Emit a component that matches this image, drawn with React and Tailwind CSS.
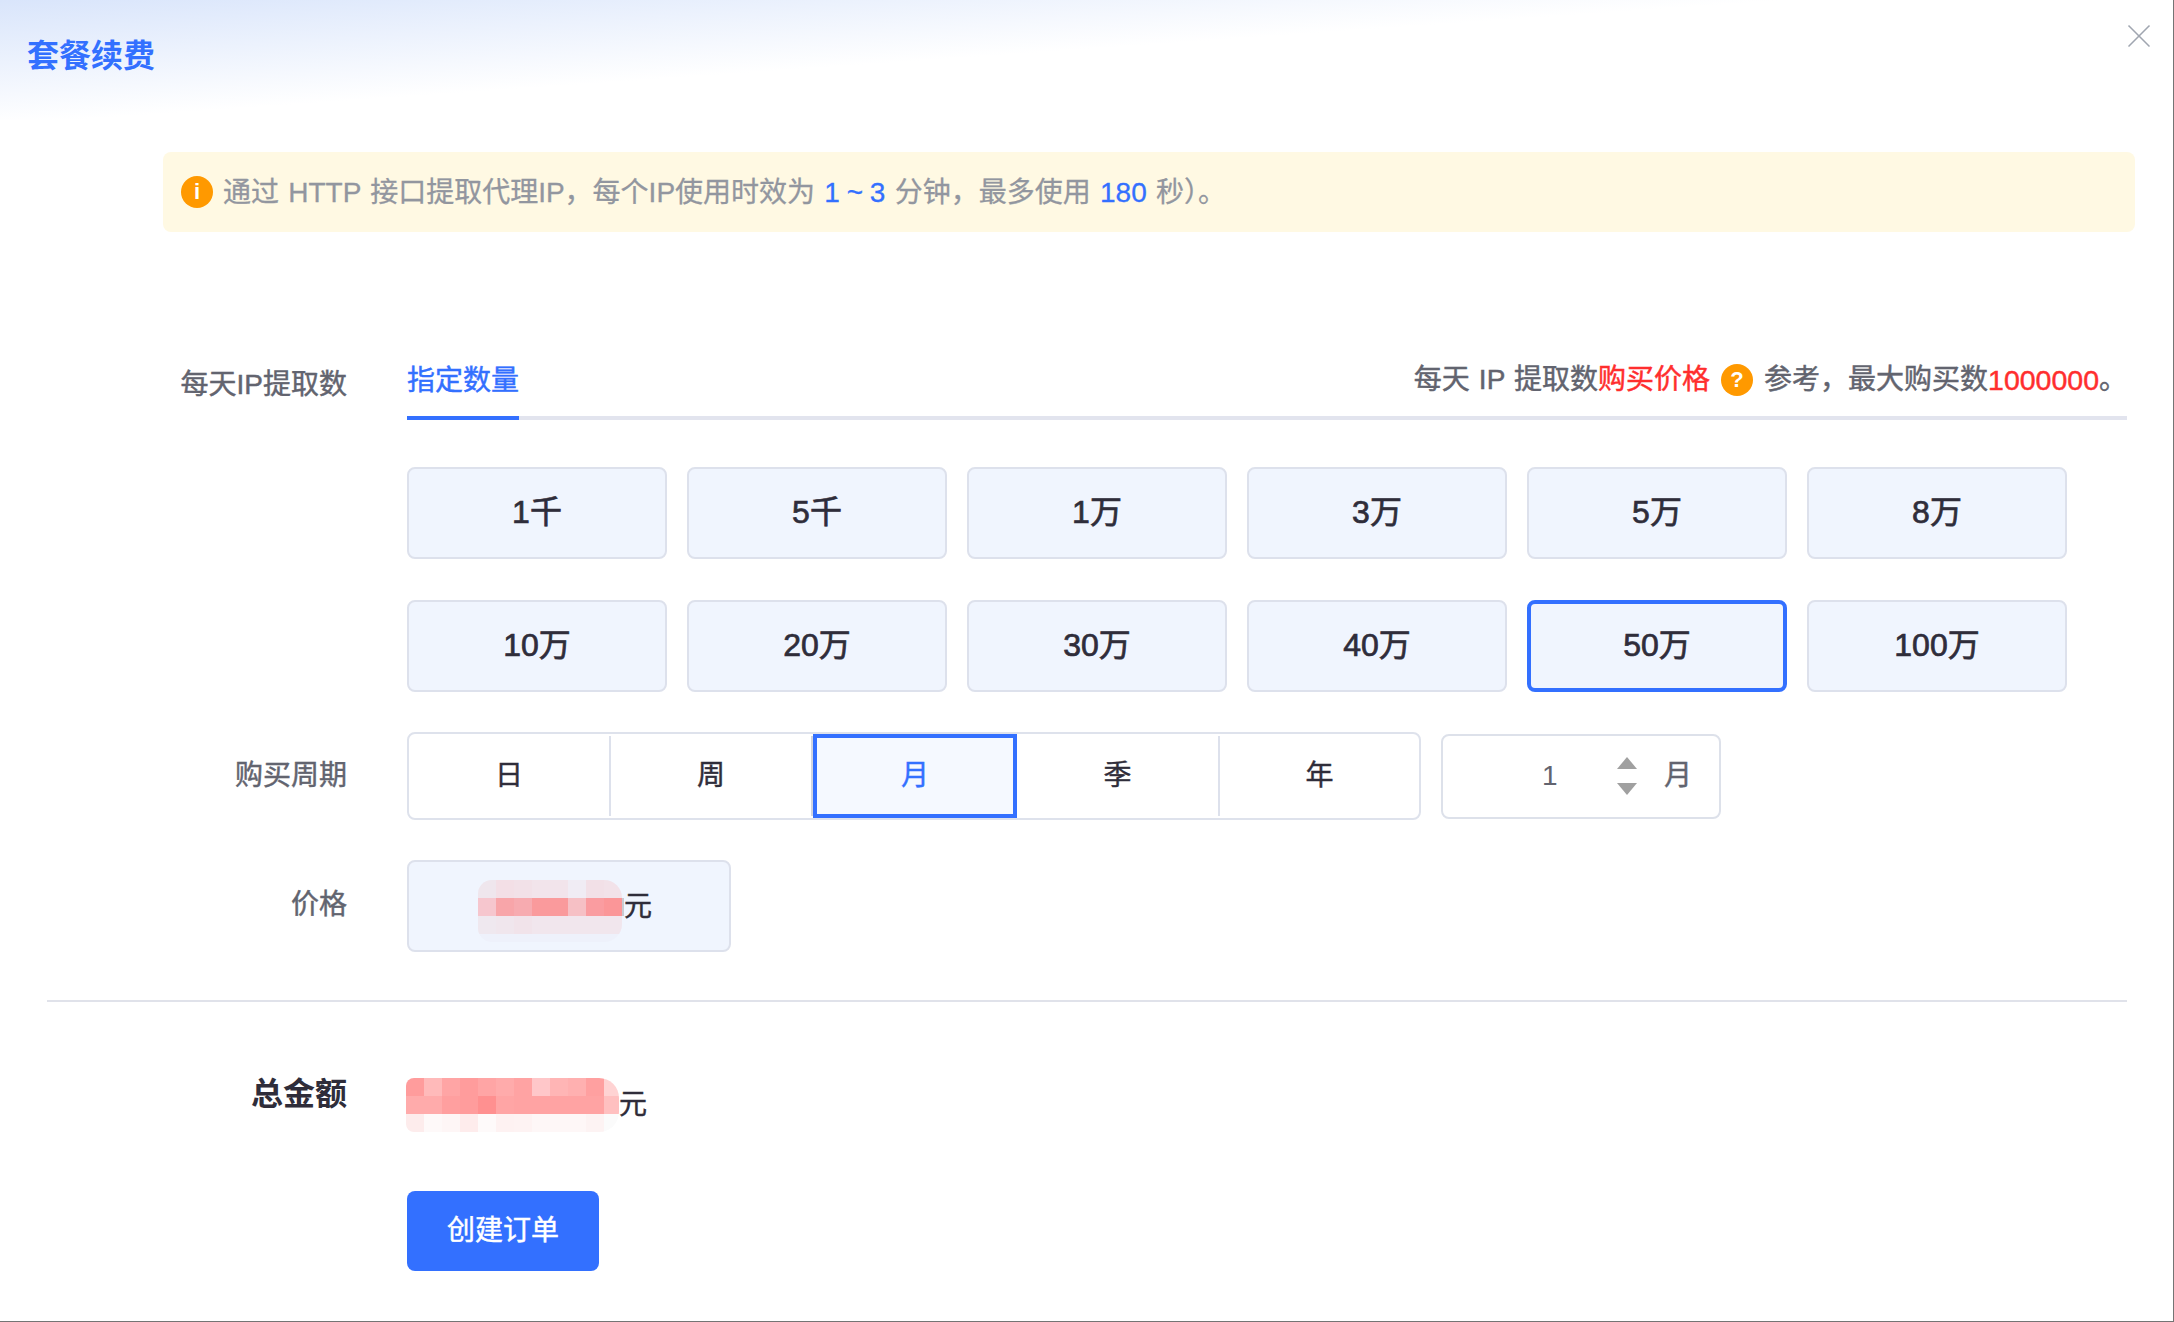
import { X } from "lucide-react";

const font = "font-['Liberation_Sans','Noto_Sans_CJK_SC',sans-serif]";
// the reference text sits between regular and bold, and the CJK font has no medium cut here
const medium = "[-webkit-text-stroke:0.45px]";

const amounts = ["1千", "5千", "1万", "3万", "5万", "8万", "10万", "20万", "30万", "40万", "50万", "100万"];

const priceBlur = [
  ["bg-[#efe6ed]", "bg-[#f3dfe6]", "bg-[#f2e1e8]", "bg-[#f2e4eb]", "bg-[#f2e4eb]", "bg-[#f0ecf4]", "bg-[#f2e0e7]", "bg-[#f2e2e9]"],
  ["bg-[#f6c6ce]", "bg-[#f8a5a9]", "bg-[#f7abb0]", "bg-[#fa9a9c]", "bg-[#fa9a9c]", "bg-[#f6c0c5]", "bg-[#fa9ca0]", "bg-[#fb9698]"],
  ["bg-[#efe8ef]", "bg-[#f0e6ed]", "bg-[#f1e3ea]", "bg-[#f1e6ed]", "bg-[#f1e6ed]", "bg-[#f1e6ed]", "bg-[#f1e6ed]", "bg-[#f1e6ed]"],
];

const totalBlur = [
  ["bg-[#ff9c9c]", "bg-[#ffbaba]", "bg-[#ffa5a5]", "bg-[#ff9c9c]", "bg-[#ffa5a5]", "bg-[#ffabab]", "bg-[#ffa3a3]", "bg-[#ffc7c9]", "bg-[#ffb5b5]", "bg-[#ffb0b0]", "bg-[#ffa0a0]", "bg-[#ffd3d3]"],
  ["bg-[#ffabab]", "bg-[#ffabab]", "bg-[#ff9f9f]", "bg-[#ff9c9c]", "bg-[#ff9090]", "bg-[#ffa5a5]", "bg-[#ffa3a3]", "bg-[#ffa3a3]", "bg-[#ffa3a3]", "bg-[#ffa3a3]", "bg-[#ffa3a3]", "bg-[#ffc0c0]"],
  ["bg-[#fdecec]", "bg-[#fef9f9]", "bg-[#fef6f6]", "bg-[#feecec]", "bg-[#fefafa]", "bg-[#fef2f2]", "bg-[#fef3f3]", "bg-[#fef7f7]", "bg-[#fef7f7]", "bg-[#fef7f7]", "bg-[#fdf3f3]", "bg-[#fbfbfb]"],
];

const Badge = ({ children }) => (
  <span className="flex h-[32px] w-[32px] shrink-0 items-center justify-center rounded-full bg-[#ff9900] text-[22px] font-bold leading-none text-white">
    {children}
  </span>
);

const Blur = ({ rows, className }) => (
  <div className={`shrink-0 overflow-hidden ${className}`}>
    {rows.map((row, i) => (
      <div key={i} className="flex">
        {row.map((color, j) => (
          <div key={j} className={`h-[18px] w-[18px] shrink-0 ${color}`} />
        ))}
      </div>
    ))}
  </div>
);

const Label = ({ children, className = `text-[28px] text-[#62646f] ${medium}` }) => (
  <div className={`w-[347px] shrink-0 text-right leading-[40px] ${className}`}>{children}</div>
);

export default function App() {
  return (
    <div className={`${font} flex h-[1322px] w-[2174px] flex-col overflow-hidden border-r border-b border-[#747474] bg-white`}>
      {/* Header */}
      <div className="flex h-[120px] shrink-0 items-start justify-between bg-[linear-gradient(176deg,#d9e5fb_0%,#ffffff_46%)] pl-[27px] pr-[14px]">
        <h1 className="mt-[36px] text-[32px] font-bold leading-[40px] text-[#3370ff]">套餐续费</h1>
        <X className="mt-[16px] h-[40px] w-[40px] text-[#a0a6b0]" strokeWidth={1} />
      </div>

      {/* Notice */}
      <div className="ml-[163px] mr-[38px] mt-[32px] flex h-[80px] shrink-0 items-center gap-[10px] rounded-lg bg-[#fff9e3] pl-[18px] text-[28px] leading-[40px] text-[#92969f]">
        <Badge>i</Badge>
        <p className="mt-[2px] whitespace-pre [-webkit-text-stroke:0.3px] [word-spacing:1.5px]">
          通过 HTTP 接口提取代理IP，每个IP使用时效为 <span className="text-[#3370ff] [word-spacing:-1px]">1 ~ 3</span> 分钟，最多使用 <span className="text-[#3370ff]">180</span> 秒）。
        </p>
      </div>

      {/* Daily extraction count */}
      <div className="mt-[124px] flex shrink-0">
        <div className="mt-[9px]">
          <Label>每天IP提取数</Label>
        </div>
        <div className="ml-[60px] flex h-[64px] w-[1720px] justify-between border-b-4 border-[#e2e4ee]">
          <div className={`-mb-[4px] w-[112px] border-b-4 border-[#3370ff] pt-[5px] text-[28px] leading-[40px] text-[#3370ff] ${medium}`}>
            指定数量
          </div>
          <div className={`flex h-[48px] items-center whitespace-pre text-[28px] leading-[40px] text-[#62646f] [word-spacing:1.4px] ${medium}`}>
            每天 IP 提取数<span className="text-[#ff2e2e]">购买价格</span>
            <span className="mx-[11px] [-webkit-text-stroke:0]"><Badge>?</Badge></span>
            参考，最大购买数<span className="text-[28.5px] text-[#ff2e2e]">1000000</span>。
          </div>
        </div>
      </div>

      <div className="ml-[407px] mt-[47px] grid shrink-0 grid-cols-[repeat(6,260px)] gap-x-[20px] gap-y-[41px]">
        {amounts.map((amount) => (
          <button
            key={amount}
            className={
              amount === "50万"
                ? "flex h-[92px] items-center justify-center rounded-lg border-4 border-[#3370ff] bg-[#f0f5fe] pb-[2px] text-[32px] text-[#2f2d3a] [-webkit-text-stroke:0.7px]"
                : "flex h-[92px] items-center justify-center rounded-lg border-2 border-[#dde1ec] bg-[#f0f5fe] pb-[2px] text-[32px] text-[#2f2d3a] [-webkit-text-stroke:0.7px]"
            }
          >
            {amount}
          </button>
        ))}
      </div>

      {/* Purchase period */}
      <div className="mt-[40px] flex shrink-0 items-center">
        <Label>购买周期</Label>
        <div className={`ml-[60px] flex h-[88px] w-[1014px] items-center rounded-lg border-2 border-[#dee2ec] text-[28px] text-[#2f2d3a] ${medium}`}>
          <div className="flex h-full w-[200px] items-center justify-center">日</div>
          <div className="h-[80px] w-[2px] bg-[#dde1ec]" />
          <div className="flex h-full w-[200px] items-center justify-center">周</div>
          <div className="h-[80px] w-[2px] bg-[#d2d5df]" />
          <div className="flex h-full w-[204px] items-center justify-center border-4 border-[#3370ff] bg-[#f5f9ff] text-[#3370ff]">月</div>
          <div className="flex h-full w-[201px] items-center justify-center">季</div>
          <div className="h-[80px] w-[2px] bg-[#dde1ec]" />
          <div className="flex h-full w-[199px] items-center justify-center">年</div>
        </div>
        <div className="ml-[20px] flex h-[85px] w-[280px] items-center rounded-lg border-2 border-[#dde1ea] text-[28px] text-[#62646f]">
          <span className="ml-[99px] w-[16px]">1</span>
          <div className="ml-[59px] flex w-[20px] flex-col gap-[14px]">
            <svg viewBox="0 0 20 12" className="h-[12px] w-[20px] fill-[#a0a0a0]"><path d="M10 0 20 12H0z" /></svg>
            <svg viewBox="0 0 20 12" className="h-[12px] w-[20px] fill-[#a0a0a0]"><path d="M0 0h20L10 12z" /></svg>
          </div>
          <span className={`ml-[27px] ${medium}`}>月</span>
        </div>
      </div>

      {/* Price */}
      <div className="mt-[40px] flex shrink-0 items-center">
        <div className="-mt-[3px]">
          <Label>价格</Label>
        </div>
        <div className="ml-[60px] flex h-[92px] w-[324px] items-center rounded-lg border-2 border-[#dde1ec] bg-[#f0f5fe] pl-[69px] text-[28px] text-[#2f2d3a]">
          <Blur rows={priceBlur} className="mt-[10px] rounded-l-[14px] rounded-r-[18px] bg-[#eef1fb] pb-[8px]" />
          <div className="mt-[2px] h-[18px] w-[2px] bg-[#c9cbd2]" />
          <span className={`mt-[2px] ${medium}`}>元</span>
        </div>
      </div>

      <div className="ml-[47px] mr-[46px] mt-[48px] h-[2px] shrink-0 bg-[#e0e2ea]" />

      {/* Total */}
      <div className="mt-[76px] flex shrink-0 items-start">
        <div className="-mt-[4px]">
          <Label className="text-[32px] font-bold text-[#2f2d3a]">总金额</Label>
        </div>
        <Blur rows={totalBlur} className="ml-[59px] w-[213px] rounded-l-lg rounded-r-[20px]" />
        <span className={`mt-[7px] text-[28px] leading-[40px] text-[#2f2d3a] ${medium}`}>元</span>
      </div>

      <button className={`ml-[407px] mt-[59px] h-[80px] w-[192px] shrink-0 rounded-lg bg-[#3370ff] text-[28px] text-white ${medium}`}>
        创建订单
      </button>
    </div>
  );
}
